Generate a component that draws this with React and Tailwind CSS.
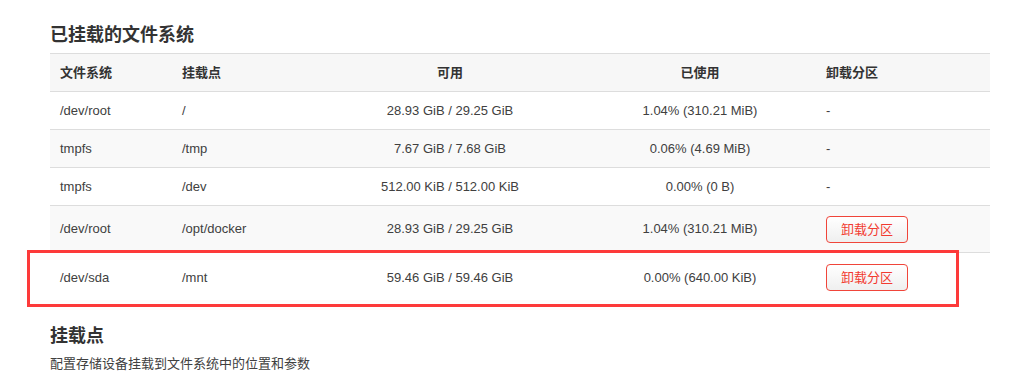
import React from "react";

const rows = [
  { fs: "/dev/root", mp: "/", avail: "28.93 GiB / 29.25 GiB", used: "1.04% (310.21 MiB)", btn: false },
  { fs: "tmpfs", mp: "/tmp", avail: "7.67 GiB / 7.68 GiB", used: "0.06% (4.69 MiB)", btn: false },
  { fs: "tmpfs", mp: "/dev", avail: "512.00 KiB / 512.00 KiB", used: "0.00% (0 B)", btn: false },
  { fs: "/dev/root", mp: "/opt/docker", avail: "28.93 GiB / 29.25 GiB", used: "1.04% (310.21 MiB)", btn: true },
  { fs: "/dev/sda", mp: "/mnt", avail: "59.46 GiB / 59.46 GiB", used: "0.00% (640.00 KiB)", btn: true },
];

function Btn() {
  return (
    <button className="w-[82px] h-[27px] rounded-[4px] border border-[#f0453a] bg-gradient-to-b from-white to-[#efefef] text-[#f23a30] text-[13px] leading-[25px]">
      卸载分区
    </button>
  );
}

export default function App() {
  return (
    <div
      className="relative w-[1035px] h-[377px] bg-white text-[#404040] overflow-hidden"
      style={{ fontFamily: '"Liberation Sans", "Noto Sans CJK SC", sans-serif' }}
    >
      <div className="pl-[50px] w-[990px]">
        <div className="pt-[22px] h-[48px] text-[18px] leading-[26px] font-bold text-[#333]">已挂载的文件系统</div>
        <div className="h-[5px]" />
        <table className="w-[940px] border-collapse text-[13px] table-fixed">
          <colgroup>
            <col className="w-[122px]" />
            <col className="w-[144px]" />
            <col className="w-[268px]" />
            <col className="w-[232px]" />
            <col className="w-[174px]" />
          </colgroup>
          <thead>
            <tr className="bg-[#f7f7f7] border-t border-b border-[#dddddd] h-[38px] font-bold text-[#333]">
              <th className="text-left pl-[10px]">文件系统</th>
              <th className="text-left pl-[10px]">挂载点</th>
              <th className="text-center">可用</th>
              <th className="text-center">已使用</th>
              <th className="text-left pl-[10px]">卸载分区</th>
            </tr>
          </thead>
          <tbody>
            {rows.map((r, i) => (
              <tr
                key={i}
                className={
                  (i % 2 === 1 ? "bg-[#f9f9f9] " : "bg-white ") +
                  (i === 3 ? "h-[47px] border-b border-[#dddddd]" : i === 4 ? "h-[49px]" : "h-[38px] border-b border-[#dddddd]")
                }
              >
                <td className="pl-[10px]">{r.fs}</td>
                <td className="pl-[10px]">{r.mp}</td>
                <td className="text-center">{r.avail}</td>
                <td className="text-center">{r.used}</td>
                <td className="pl-[10px]">{r.btn ? <Btn /> : "-"}</td>
              </tr>
            ))}
          </tbody>
        </table>
        <div className="mt-[21px] text-[18px] leading-[26px] font-bold text-[#333]">挂载点</div>
        <div className="mt-[5px] text-[13px] leading-[20px] text-[#404040]">配置存储设备挂载到文件系统中的位置和参数</div>
      </div>
      <div className="absolute left-[27px] top-[250px] w-[932px] h-[57px] border-[3px] border-[#fd3a3a] pointer-events-none" />
    </div>
  );
}
